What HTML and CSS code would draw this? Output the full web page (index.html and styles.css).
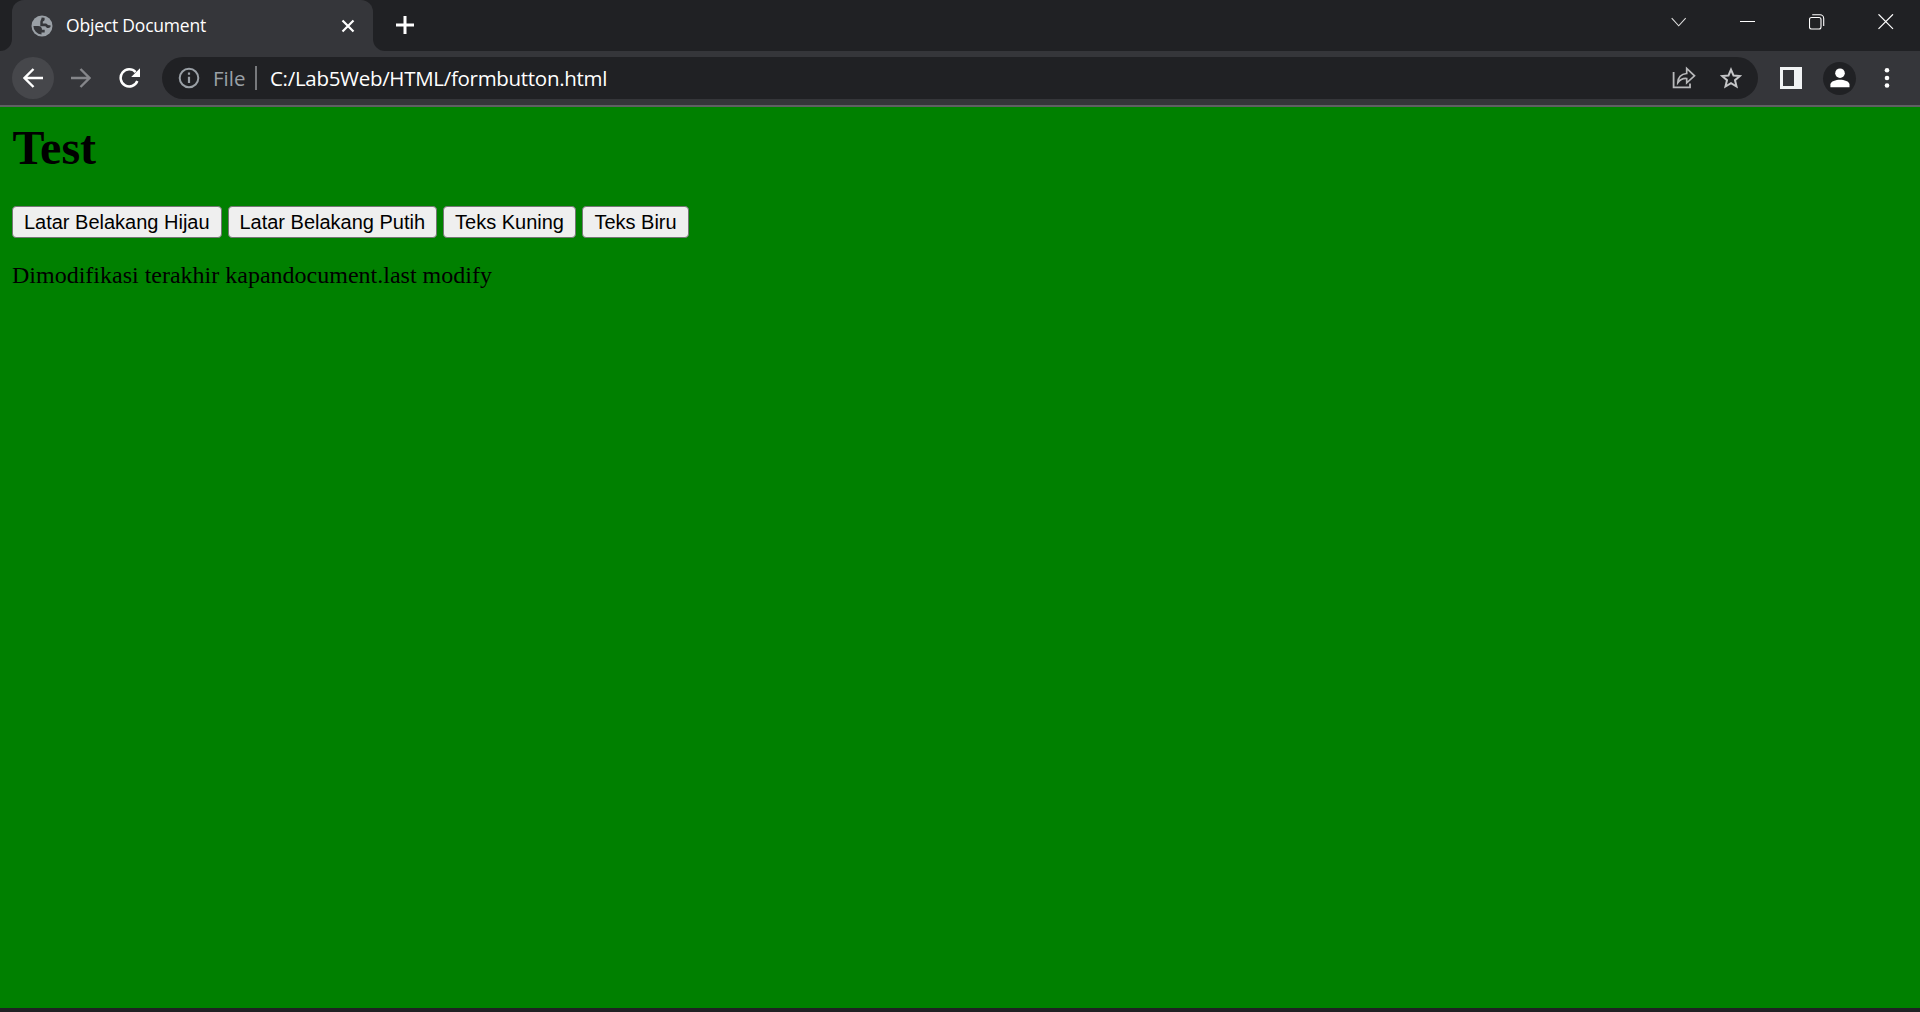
FILE: index.html
```
<!DOCTYPE html>
<html lang="id">
<head>
<meta charset="utf-8">
<title>Object Document</title>
<link rel="stylesheet" href="styles.css">
</head>
<body>
<div class="browser">
  <header class="tab-strip">
    <div class="strip-edge"></div>
    <div class="tab">
      <svg class="globe" width="22" height="22" viewBox="0 0 22 22"><circle cx="11" cy="11" r="10.5" fill="#9aa0a6"/><path d="M2.4 11H7C9.8 11 11 12.5 11 14.7H13.7V17.5H10.5V19.5A8.6 8.6 0 0 1 2.4 11ZM13.5 2.7C14 4.8 13.5 6.2 11.8 6.4V8.5H14.5C16.2 8.5 16 10.5 19.5 10.2V12C17.5 13.8 15.3 13 14.5 11.2H9.3V7C9.3 5.5 10.5 5 10.6 2.6Z" fill="#35363a"/></svg>
      <span class="tab-title">Object Document</span>
      <svg class="tab-close" width="14" height="14" viewBox="0 0 14 14"><path d="M1.5 1.5 12.5 12.5M12.5 1.5 1.5 12.5" stroke="#fff" stroke-width="2.2"/></svg>
    </div>
    <div class="strip-rest">
      <svg class="new-tab" width="18" height="18" viewBox="0 0 18 18"><path d="M9 0V18M0 9H18" stroke="#fff" stroke-width="3"/></svg>
      <div class="window-controls">
        <svg width="16" height="16" viewBox="0 0 16 16"><path d="M.7 4.2 7.7 11.8 14.7 4.2" fill="none" stroke="#ddd" stroke-width="1.1"/></svg>
        <svg width="16" height="16" viewBox="0 0 16 16"><path d="M0 7.5H15" stroke="#fff"/></svg>
        <svg width="16" height="16" viewBox="0 0 16 16"><g fill="none" stroke="#fff" stroke-width="1.1"><rect x=".5" y="3.5" width="11.5" height="11.5" rx="2"/><path d="M3.2 .7H11A3.7 3.7 0 0 1 14.7 4.4V12"/></g></svg>
        <svg width="16" height="16" viewBox="0 0 16 16"><path d="M.5.3 15 14.8M15 .3.5 14.8" stroke="#fff" stroke-width="1.2"/></svg>
      </div>
    </div>
  </header>
  <nav class="toolbar">
    <div class="back"><svg width="20" height="20" viewBox="0 0 20 20"><path d="M20 10H1.5M10.5 1 1.5 10l9 9" fill="none" stroke="#fff" stroke-width="2.4"/></svg></div>
    <svg class="forward" width="20" height="20" viewBox="0 0 20 20"><path d="M0 10H18.5M9.5 1l9 9-9 9" fill="none" stroke="#85868a" stroke-width="2.4"/></svg>
    <svg class="reload" width="22" height="20" viewBox="0 0 22 20"><path d="M18.3 13A8.6 8.6 0 1 1 16.6 4.1" fill="none" stroke="#fff" stroke-width="2.5"/><path d="M21 .2V9H12.2Z" fill="#fff"/></svg>
    <div class="address">
      <svg width="22" height="22" viewBox="0 0 22 22"><circle cx="11" cy="11" r="9.3" fill="none" stroke="#9aa0a6" stroke-width="2"/><path d="M11 5.5V7.8M11 9.7V16" stroke="#9aa0a6" stroke-width="2.2"/></svg>
      <span class="scheme">File</span>
      <span class="divider"></span>
      <span class="url">C:/Lab5Web/HTML/formbutton.html</span>
      <svg class="share" width="24" height="24" viewBox="0 0 24 24"><path d="M1.6 6V21.4H18V17.5" fill="none" stroke="#b8b9bb" stroke-width="1.8"/><path d="M5.8 16.7C6 11 9 8 14.7 7.5V2.5L22.5 9.8l-7.8 7V12.5C11 12.2 8.1 13.5 5.8 16.7Z" fill="none" stroke="#b8b9bb" stroke-width="1.7"/></svg>
      <svg class="star" width="22" height="22" viewBox="0 0 22 22"><path d="m11 2.6 2.5 5.9 6.4.5-4.9 4.2 1.5 6.3L11 16.1l-5.5 3.4L7 13.2 2.1 9l6.4-.5Z" fill="none" stroke="#c5c6c8" stroke-width="2"/></svg>
    </div>
    <svg class="panel" width="22" height="22" viewBox="0 0 22 22"><path d="M0 0H22V22H0ZM3 3V19H14V3Z" fill="#f1f3f4" fill-rule="evenodd"/></svg>
    <div class="profile"><svg width="20" height="20" viewBox="0 0 20 20"><circle cx="10" cy="5.2" r="4.8" fill="#fff"/><path d="M.4 19.2V16.5C.4 13.2 6 11.7 10 11.7s9.5 1.5 9.5 4.8V19.2Z" fill="#fff"/></svg></div>
    <svg class="menu" width="6" height="22" viewBox="0 0 6 22"><g fill="#fff"><circle cx="3" cy="3.3" r="2.3"/><circle cx="3" cy="11" r="2.3"/><circle cx="3" cy="18.5" r="2.3"/></g></svg>
  </nav>
  <main class="page">
    <h1>Test</h1>
    <div class="buttons">
      <button class="btn-wide">Latar Belakang Hijau</button>
      <button class="btn-wide">Latar Belakang Putih</button>
      <button class="btn-medium">Teks Kuning</button>
      <button class="btn-small">Teks Biru</button>
    </div>
    <p>Dimodifikasi terakhir kapandocument.last modify</p>
  </main>
  <div class="taskbar-edge"></div>
</div>
</body>
</html>
```
FILE: styles.css
```
* { box-sizing: border-box; }
body { margin: 0; background: #202124; }
svg { display: block; flex: none; }
.browser { display: flex; flex-direction: column; height: 1012px; overflow: hidden; }

.tab-strip { display: flex; height: 51px; flex: none; background: #35363a; }
.strip-edge { width: 12px; background: #202124; border-bottom-right-radius: 12px; }
.tab {
  display: flex; align-items: center; width: 361px; padding: 0 18px 0 19px;
  background: linear-gradient(#202124, #202124) top / 100% 14px no-repeat, #35363a;
  position: relative; z-index: 0;
}
.tab::before {
  content: ""; position: absolute; inset: 0; z-index: -1;
  background: #35363a; border-radius: 12px 12px 0 0;
}
.tab-title {
  flex: 1; margin: -1px 0 0 13px; white-space: nowrap; color: #fff;
  font: 17.5px/24px "Open Sans", "Noto Sans", sans-serif; letter-spacing: -0.2px;
}
.strip-rest {
  display: flex; flex: 1; justify-content: space-between;
  padding: 0 26px 0 23px; background: #202124; border-bottom-left-radius: 12px;
}
.new-tab { margin-top: 16px; }
.window-controls { display: flex; gap: 53px; margin-top: 14px; }

.toolbar {
  display: flex; align-items: center; flex: none; height: 56px; padding: 4px 30px 4px 12px;
  background: #35363a; border-bottom: 2px solid #5f6063;
}
.back {
  display: flex; align-items: center; justify-content: center;
  width: 42px; height: 42px; border-radius: 50%; background: #46474b;
}
.forward { margin-left: 17px; }
.reload { margin-left: 28px; }
.address {
  display: flex; align-items: center; width: 1596px; height: 42px; margin-left: 21px;
  padding: 0 16px 0 16px; border-radius: 21px; background: #202124;
  font: 20.5px/28px "Open Sans", "Noto Sans", sans-serif; white-space: nowrap;
}
.scheme { width: 42px; margin-left: 13px; color: #9aa0a6; }
.divider { width: 2px; height: 24px; background: #77797c; }
.url { flex: 1; margin-left: 13px; color: #fff; letter-spacing: -0.3px; }
.share { margin-right: 24px; }
.panel { margin-left: 22px; }
.profile {
  display: flex; align-items: center; justify-content: center;
  width: 33px; height: 33px; margin-left: 21px; border-radius: 50%; background: #202124;
}
.menu { margin-left: 28px; }

.page {
  flex: 1; padding: 13px 12px 12px; background: #008000; color: #000;
  font: 24px/27px "Liberation Serif", "Times New Roman", serif;
}
h1 { margin: 0 0 31px; padding-left: 0.5px; font-size: 48px; line-height: 55px; }
.buttons { display: flex; gap: 6px; height: 32px; }
button {
  height: 32px; padding: 0; border: 1px solid #767676; border-radius: 4px;
  background: #efefef; color: #000; white-space: nowrap;
  font: 20px/23px "Liberation Sans", Arial, sans-serif;
}
.btn-wide { width: 209.5px; }
.btn-medium { width: 133px; }
.btn-small { width: 107px; }
p { margin: 24px 0 0; }
.taskbar-edge { flex: none; height: 4px; background: #202124; }
```
